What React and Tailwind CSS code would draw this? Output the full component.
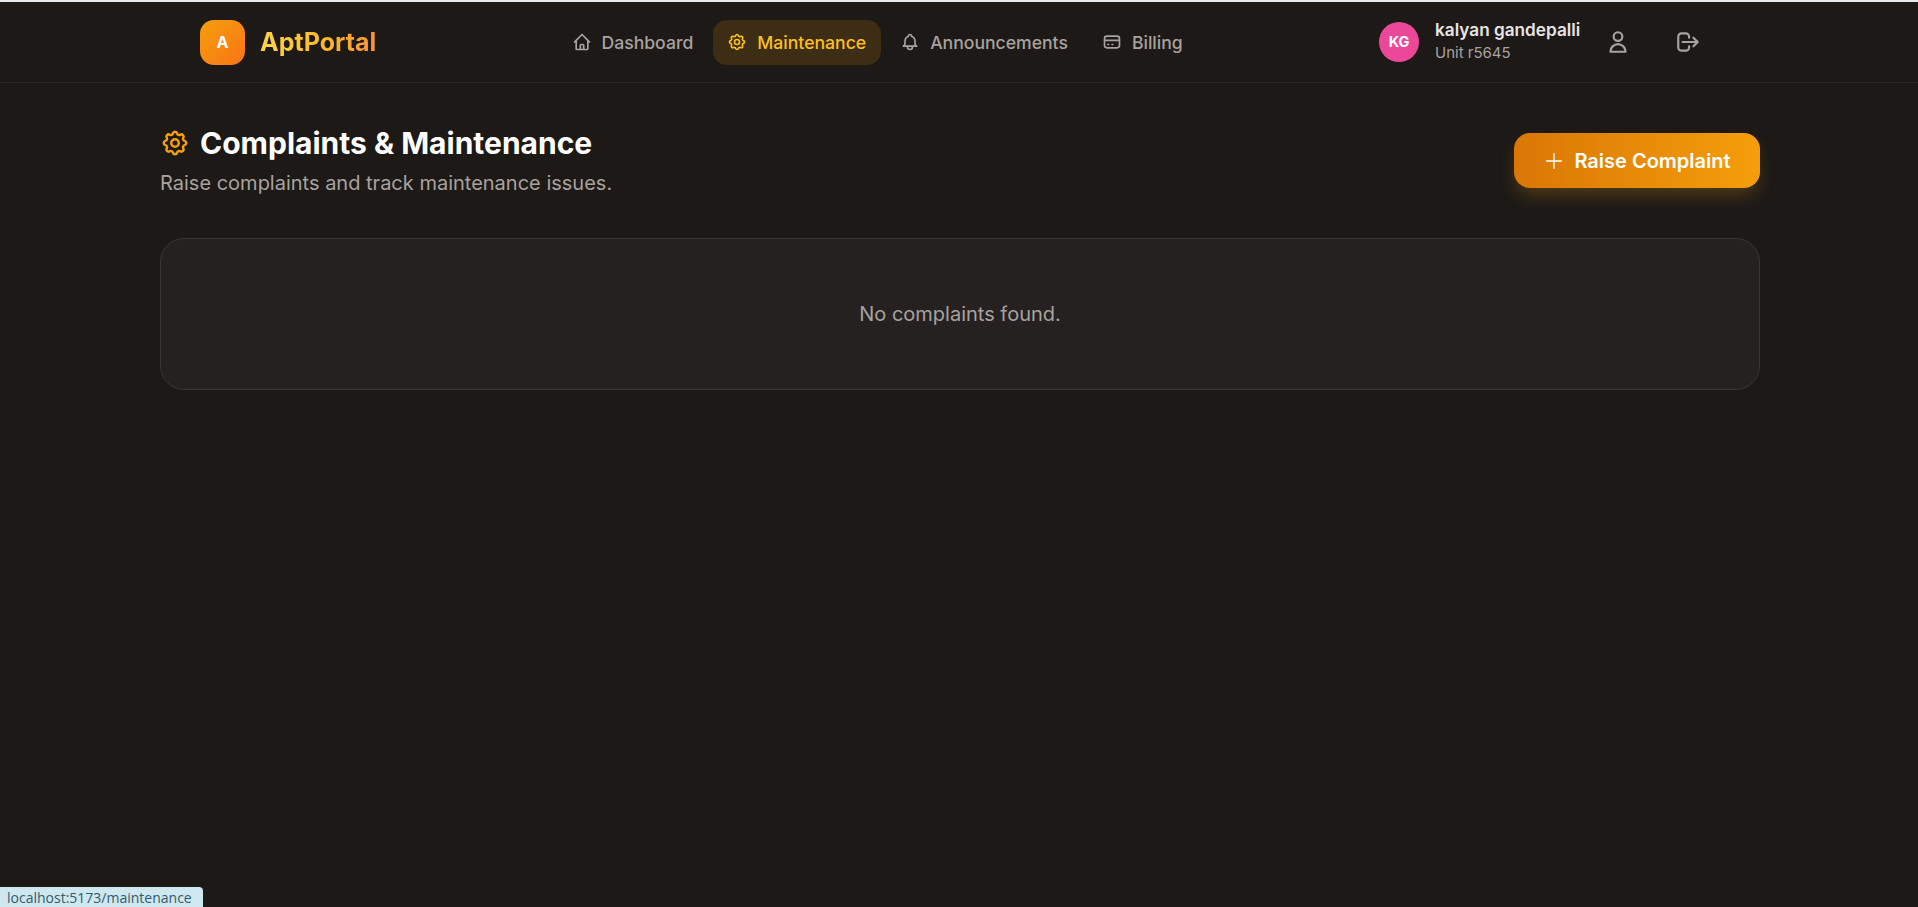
import React from "react";
import {
  HiOutlineHome,
  HiOutlineCog,
  HiOutlineBell,
  HiOutlineCreditCard,
  HiOutlineUser,
  HiOutlineLogout,
  HiOutlinePlus,
} from "react-icons/hi";

const links = [
  { label: "Dashboard", icon: HiOutlineHome },
  { label: "Maintenance", icon: HiOutlineCog, active: true },
  { label: "Announcements", icon: HiOutlineBell },
  { label: "Billing", icon: HiOutlineCreditCard },
];

function NavLink({ label, icon: Icon, active }) {
  return (
    <a
      href="#"
      className={
        active
          ? "flex h-[45px] items-center gap-[10px] rounded-[14px] bg-[#3e2d15] px-[14.5px] text-[17.6px] font-medium text-[#fbbf24]"
          : "flex h-[45px] items-center gap-[10px] rounded-[14px] px-[14.5px] text-[17.6px] font-medium text-[#a8a29e]"
      }
    >
      <Icon size={20} />
      <span className="pt-[2px]">{label}</span>
    </a>
  );
}

export default function App() {
  return (
    <div className="relative h-[907px] overflow-hidden border-t-2 border-[#e7e9ec] bg-[#1c1917] font-['Inter',sans-serif]">
      <header className="h-[81px] border-b border-[#2c2927]">
        <div className="ml-[160px] flex h-full w-[1600px] items-center px-[40px]">
          <div className="flex w-[357px] items-center gap-[15px]">
            <div className="flex h-[45px] w-[45px] items-center justify-center rounded-[14px] bg-gradient-to-br from-[#f59e0b] to-[#f97316] text-[16px] font-bold text-white">
              A
            </div>
            <span className="bg-gradient-to-r from-[#fcd34d] via-[#fbbf24] to-[#fb923c] bg-clip-text pt-[1px] text-[25px] font-bold text-transparent">
              AptPortal
            </span>
          </div>
          <nav className="flex items-center gap-[5px]">
            {links.map((l) => (
              <NavLink key={l.label} {...l} />
            ))}
          </nav>
          <div className="ml-auto flex items-center">
            <div className="flex h-[40px] w-[40px] items-center justify-center rounded-full bg-[#ec4899] text-[14.5px] font-bold text-white">
              KG
            </div>
            <div className="ml-[16px] w-[170px] pb-[3px]">
              <p className="mb-[3px] text-[17.2px] leading-[20px] font-semibold text-[#e7e5e4]">kalyan gandepalli</p>
              <p className="text-[15px] leading-[19px] text-[#a8a29e]">Unit r5645</p>
            </div>
            <HiOutlineUser size={26} className="text-[#a8a29e]" />
            <HiOutlineLogout size={26} className="ml-[44px] mr-[19px] text-[#a8a29e]" />
          </div>
        </div>
      </header>

      <main className="ml-[160px] w-[1600px]">
        <div className="flex items-start justify-between pt-[40px]">
          <div>
            <div className="flex items-center gap-[10px]">
              <HiOutlineCog size={30} className="text-[#f59e0b]" />
              <h1 className="text-[30px] leading-[40px] font-bold text-white">Complaints &amp; Maintenance</h1>
            </div>
            <p className="mt-[6px] text-[20px] leading-[28px] text-[#a8a29e]">
              Raise complaints and track maintenance issues.
            </p>
          </div>
          <button className="mt-[10px] flex h-[55px] w-[246px] items-center justify-center gap-[9px] rounded-[16px] bg-gradient-to-r from-[#d97706] to-[#f59e0b] text-[20px] font-semibold text-white shadow-[0_10px_18px_-3px_rgba(245,158,11,0.25)]">
            <HiOutlinePlus size={22} strokeWidth={1.5} />
            Raise Complaint
          </button>
        </div>
        <section className="mt-[41px] flex h-[152px] items-center justify-center rounded-[24px] border border-[#383533] bg-[#242120] text-[20px] text-[#a8a29e]">
          No complaints found.
        </section>
      </main>

      <div className="absolute bottom-0 left-0 flex h-[20px] w-[203px] items-center rounded-tr-[4px] bg-[#cfe7ee] pl-[7px] font-['Open_Sans',sans-serif] text-[14px] text-[#2f5d70]">
        localhost:5173/maintenance
      </div>
    </div>
  );
}
